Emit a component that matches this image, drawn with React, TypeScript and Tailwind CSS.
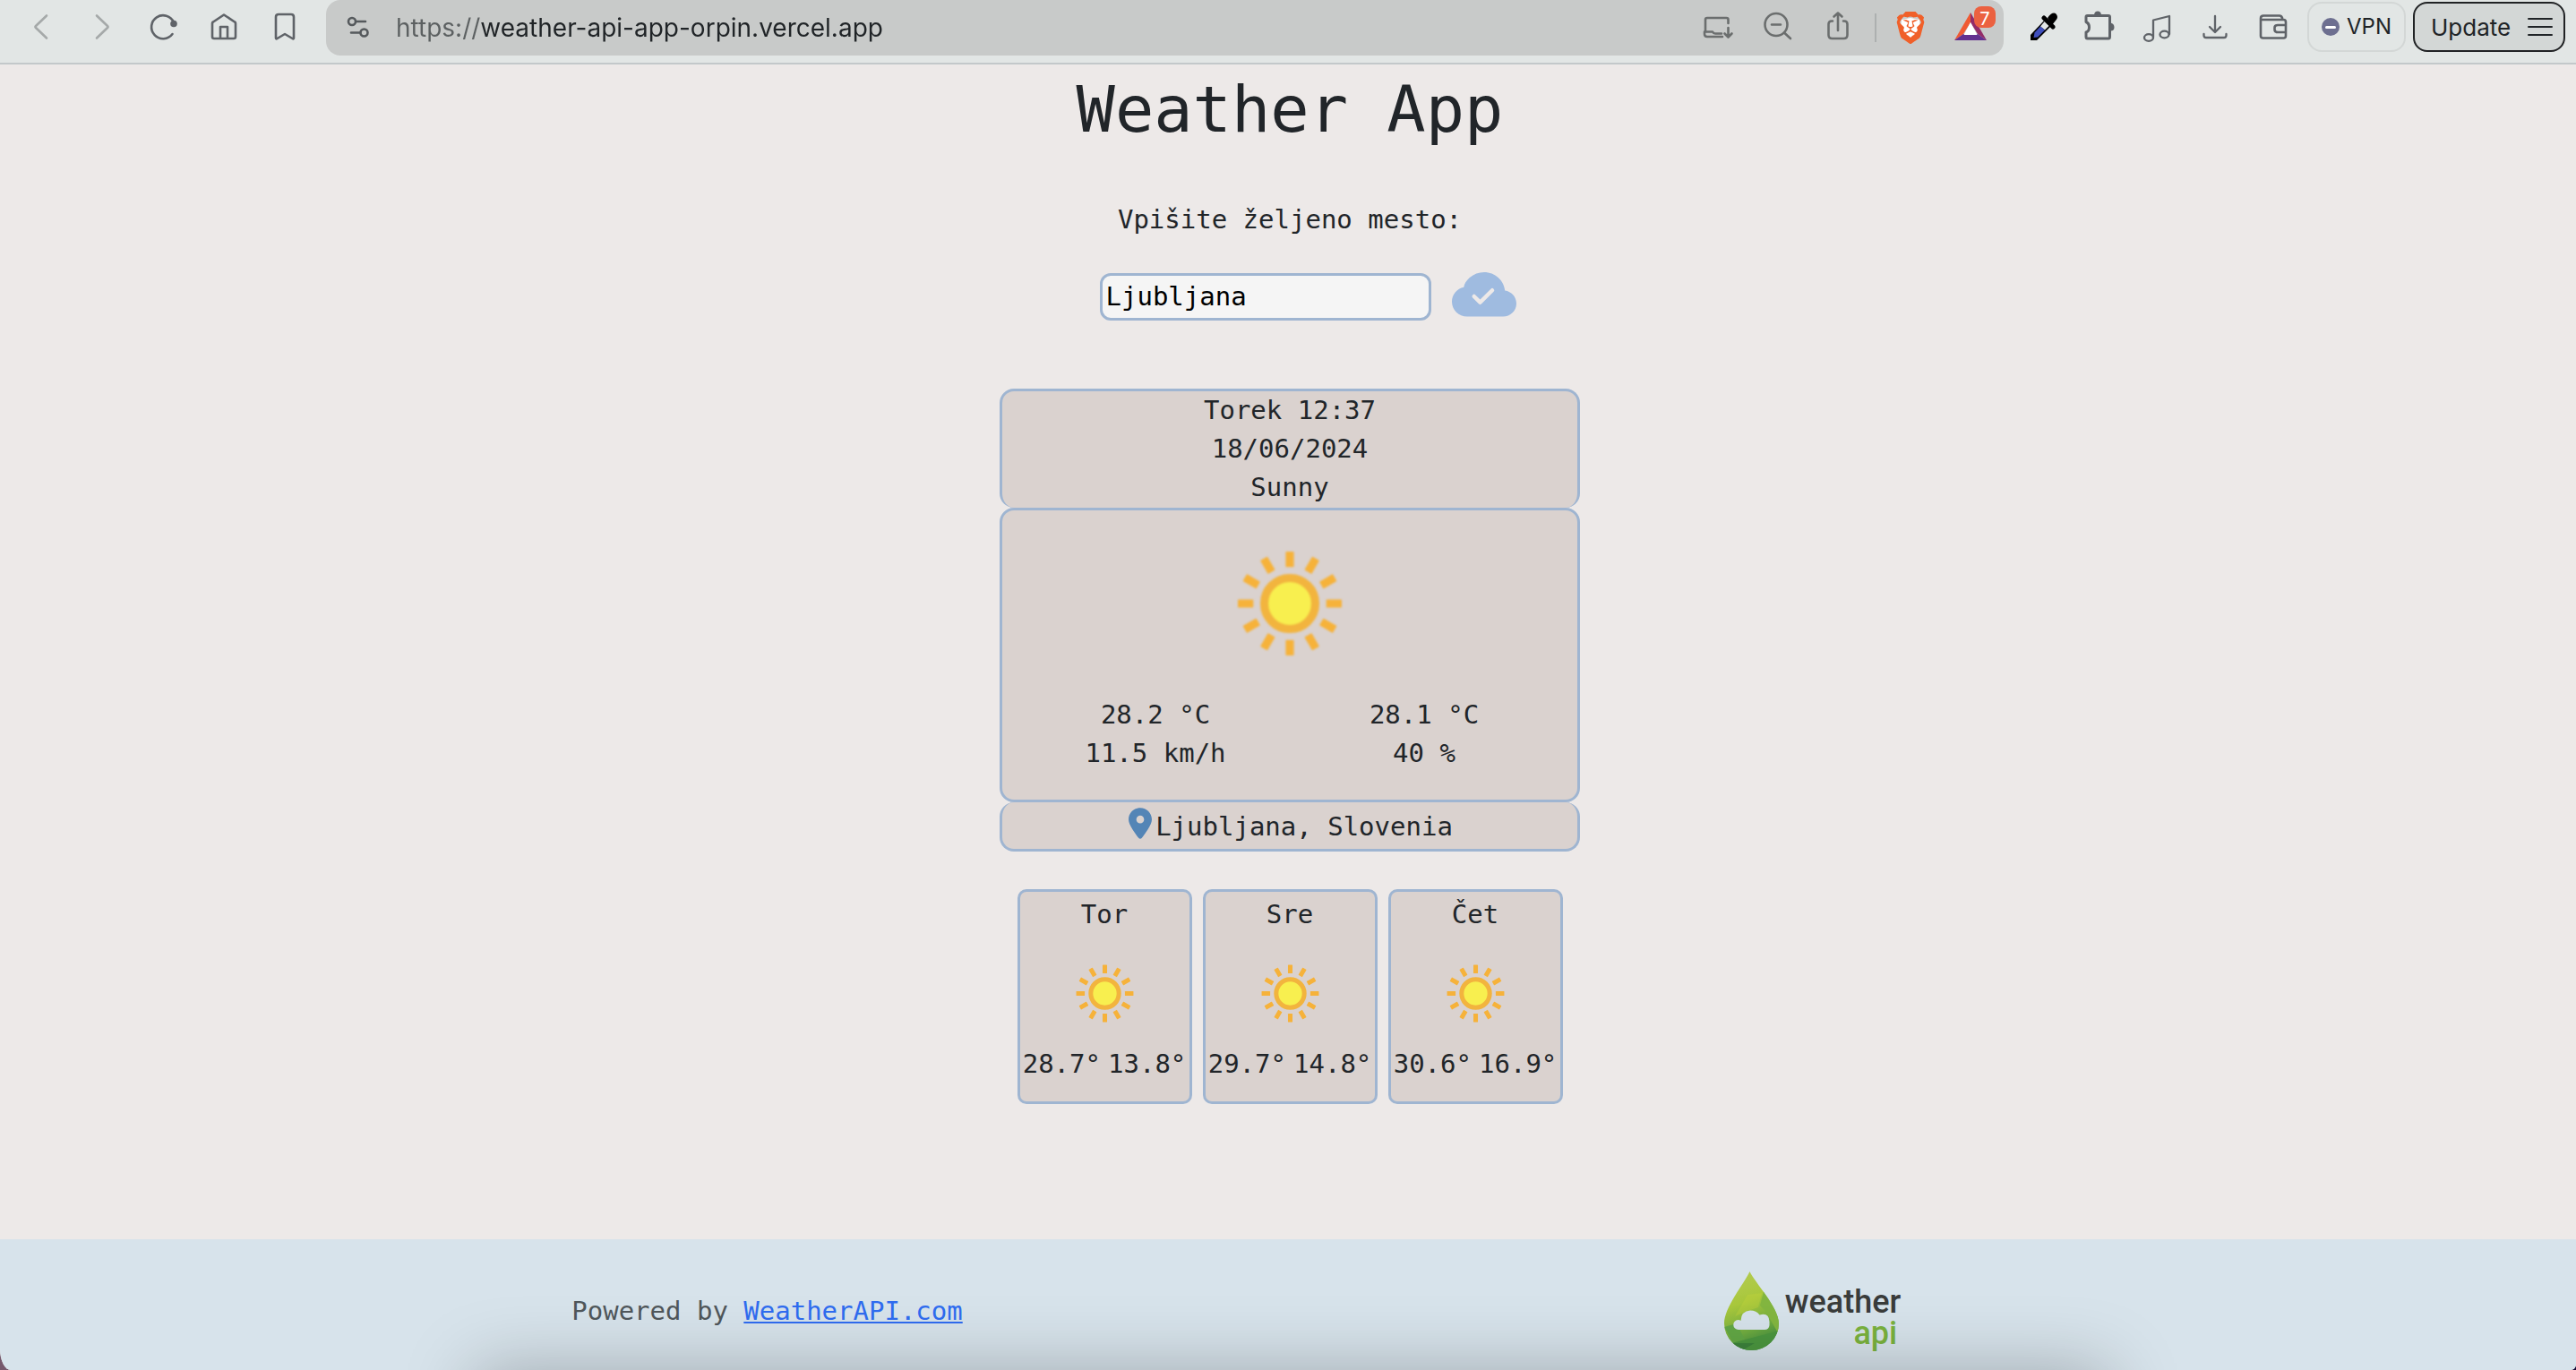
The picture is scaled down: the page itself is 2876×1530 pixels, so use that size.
import type { ReactNode } from "react";
import { FaLocationDot } from "react-icons/fa6";
import { BsCloudCheckFill } from "react-icons/bs";
import { SiBrave } from "react-icons/si";

function ToolButton({ label, muted, children }: { label: string; muted?: boolean; children: ReactNode }) {
  return (
    <button aria-label={label} className={muted ? "size-10 shrink-0 text-[#a5a9a9]" : "size-10 shrink-0"}>
      <svg className="size-10" viewBox="0 0 40 40" fill="none" stroke="currentColor" strokeWidth="2.6" strokeLinecap="round" strokeLinejoin="round">
        {children}
      </svg>
    </button>
  );
}

function Toolbar() {
  return (
    <header className="flex h-[72px] items-start border-b-2 border-[#c3c8ca] bg-[#e2e6e5] pr-3 font-['Inter',sans-serif] text-[28px] text-[#5f6368]">
      <nav aria-label="Navigation" className="flex h-[60px] shrink-0 items-center gap-7 pl-[26px]">
        <ToolButton label="Back" muted><path d="M26 7.500 14 19Q13 20 14 21L26 32.500" /></ToolButton>
        <ToolButton label="Forward" muted><path d="M14 7.500 26 19Q27 20 26 21L14 32.500" /></ToolButton>
        <ToolButton label="Reload">
          <path d="M30.500 28A13 13 0 1 1 32 15" />
          <circle cx="32" cy="16.500" r="3.800" fill="currentColor" stroke="none" />
        </ToolButton>
        <ToolButton label="Home">
          <path d="M7 16Q7 15 8 14.500L20 6.500 32 14.500Q33 15 33 16V31Q33 33 31 33H9Q7 33 7 31ZM16 33V20H24V33" />
        </ToolButton>
        <ToolButton label="Bookmark">
          <path d="M10 32.500V9Q10 6 13 6H27Q30 6 30 9V32.500Q30 34 28.500 33L20 28 11.500 33Q10 34 10 32.500Z" />
        </ToolButton>
      </nav>

      <div className="ml-[26px] flex h-[62px] min-w-0 flex-1 items-center rounded-2xl bg-[#c8cac9] pr-[17px] text-[#6b6e6e]">
        <button aria-label="Site settings" className="ml-5 size-8 shrink-0 text-[#55595c]">
          <svg className="size-8" viewBox="0 0 32 32" fill="none" stroke="currentColor" strokeWidth="2.6" strokeLinecap="round">
            <circle cx="9" cy="9" r="4" /><path d="M14 9H24M8 21.500H18" /><circle cx="22.500" cy="21.500" r="4" />
          </svg>
        </button>
        <input
          aria-label="Address"
          type="url"
          defaultValue="https://weather-api-app-orpin.vercel.app"
          className="ml-[26px] h-12 min-w-0 flex-1 bg-[linear-gradient(to_right,#5c6061_94px,#202427_94px)] bg-clip-text text-transparent outline-none"
        />
        <div className="flex shrink-0 items-center gap-[27px]">
          <ToolButton label="Install app">
            <path d="M31.500 15V11Q31.500 9 29.500 9H8Q6 9 6 11V24M31.500 20V30M27.500 26.500 31.500 30.500 35.500 26.500" />
            <path d="M25 30H8Q5 30 5 27V24.500H14Q15 26.500 17 26.500H24" />
          </ToolButton>
          <ToolButton label="Zoom out">
            <circle cx="18" cy="16.500" r="12.500" /><path d="M13 16.500H23M27 25.500 34 32" />
          </ToolButton>
          <ToolButton label="Share">
            <path d="M14 12.500H13Q9.500 12.500 9.500 16V28Q9.500 32 13.500 32H26.500Q30.500 32 30.500 28V16Q30.500 12.500 27 12.500H26M20 23V4M15.500 7.500 20 3.500 24.500 7.500" />
          </ToolButton>
        </div>
        <div className="ml-[21px] mr-[18px] h-8 w-0.5 bg-[#adb0b0]" />
        <button aria-label="Brave Shields" className="relative mr-[27px] grid size-10 shrink-0 place-items-center">
          <svg className="absolute size-9" viewBox="0 0 36 36" fill="#fff"><path d="M8 9 18 7 28 9 29 18 24 27 18 31 12 27 7 18Z" /></svg>
          <SiBrave className="relative size-9 text-[#f0602a]" />
        </button>
        <button aria-label="Rewards, 7 new" className="relative size-10 shrink-0">
          <svg className="size-10" viewBox="0 0 40 40">
            <path d="M20 3 2 34 12 27 20 14Z" fill="#f05a33" />
            <path d="M20 3 38 34 28 27 20 14Z" fill="#932c68" />
            <path d="M2 34H38L28 27H12Z" fill="#63308f" />
            <path d="M20 14 12.500 28H27.500Z" fill="#fff" />
          </svg>
          <span className="absolute -top-1 left-6 grid size-6 place-items-center rounded-lg bg-[#eb6140] text-xl text-white">7</span>
        </button>
      </div>

      <div className="flex h-[60px] shrink-0 items-center gap-[25px] pl-[25px]">
        <div className="flex items-center gap-[21px]">
          <ToolButton label="Colour picker">
            <path d="M5 35V29L21 12 28 19 12 35Z" fill="#000" stroke="none" />
            <path d="M21.500 13 16 19.500 21 23.500 26.500 18Z" fill="#e2e6e5" stroke="none" />
            <path d="M16 19.500 9.500 26.500 8.500 32 13 31.500 21 23.500Z" fill="#3f4fbd" stroke="none" />
            <path d="M20 10 30 20" stroke="#000" strokeWidth="5" />
            <path d="M24 10Q29 3 33 5 37 9 33 13L29 18Z" fill="#000" stroke="none" />
          </ToolButton>
          <ToolButton label="Extensions">
            <path d="M6 9Q6 7.500 7.500 7.500H31Q32.500 7.500 32.500 9V31Q32.500 33 31 33H7.500Q6 33 6 31V26Q9.500 25 9.500 20.500 9.500 16 6 14.500Z" strokeWidth="3" />
            <path d="M15 6.500Q15.500 2.500 19 2.500T23 6.500ZM33.500 15.500Q37.500 16.500 37.500 20.500T33.500 24.500Z" fill="currentColor" stroke="none" />
          </ToolButton>
        </div>
        <ToolButton label="Playlist">
          <g strokeWidth="2.3"><path d="M16 31.500V12.500L34 8V28" /><ellipse cx="11" cy="32" rx="5" ry="3.800" /><ellipse cx="28.500" cy="28.500" rx="5" ry="3.800" /></g>
        </ToolButton>
        <ToolButton label="Downloads">
          <path d="M20 8V25M14 20 20 26 26 20M7.500 28V29.500Q7.500 32 10 32H30Q32.500 32 32.500 29.500V28" strokeWidth="2.3" />
        </ToolButton>
        <ToolButton label="Wallet">
          <path d="M30 12V10Q29 7.500 27 7.500H9Q6 7.500 6 10.500V30Q6 32.500 8.500 32.500H31.500Q34 32.500 34 30V14.500Q34 12 31.500 12H7M34 18H25Q21.500 18 21.500 21V23Q21.500 26 25 26H34" />
        </ToolButton>
      </div>
      <button className="ml-[18px] mt-0.5 flex h-14 w-[110px] shrink-0 items-center gap-2 rounded-2xl border-2 border-[#d3d7d6] pl-[14px] text-2xl text-[#202427]">
        <span className="grid size-5 place-items-center rounded-full bg-[#6d6f90]"><span className="h-[3px] w-3 rounded-full bg-white" /></span>
        VPN
      </button>
      <button className="ml-2 mt-0.5 flex h-14 w-[170px] shrink-0 items-center justify-between rounded-2xl border-2 border-[#202224] bg-[#d3d7d6] pl-[18px] pr-3 text-[26px] text-[#202427]">
        Update
        <svg className="h-6 w-7" viewBox="0 0 28 24" stroke="currentColor" strokeWidth="2" strokeLinecap="round"><path d="M1 3H27M1 12H27M1 21H27" /></svg>
      </button>
    </header>
  );
}

const rayAngles = [0, 30, 60, 90, 120, 150, 180, 210, 240, 270, 300, 330];

function Sun({ className }: { className: string }) {
  return (
    <svg className={className} viewBox="0 0 116 116" role="img" aria-label="Sunny">
      {rayAngles.map((angle) => (
        <rect key={angle} x="53.500" y="1" width="9" height="17" rx="1" fill="#f6b23a" transform={`rotate(${angle} 58 58)`} />
      ))}
      <circle cx="58" cy="58" r="28" fill="#f8ef4f" stroke="#f2b43e" strokeWidth="9" />
    </svg>
  );
}

const forecast = [
  { day: "Tor", high: "28.7°", low: "13.8°" },
  { day: "Sre", high: "29.7°", low: "14.8°" },
  { day: "Čet", high: "30.6°", low: "16.9°" },
];

function Logo() {
  return (
    <div className="flex items-start gap-1.5">
      <svg className="h-[88px] w-[62px]" viewBox="0 0 62 88" aria-hidden="true">
        <defs>
          <linearGradient id="leaf" x1="0" y1="0" x2="0.3" y2="1">
            <stop offset="0" stopColor="#b5cb55" /><stop offset="0.45" stopColor="#a9c83c" /><stop offset="0.8" stopColor="#72ad40" /><stop offset="1" stopColor="#4b9440" />
          </linearGradient>
          <clipPath id="drop"><path d="M28.500 0C34 12 61 40 61 58A30.500 30 0 0 1 0 58C0 40 22 14 28.500 0Z" /></clipPath>
        </defs>
        <g clipPath="url(#drop)">
          <rect width="62" height="88" fill="url(#leaf)" />
          <path d="M44 22 62 40V72L46 44 40 38Z" fill="#83b640" />
          <path d="M26 26 42 24 38 40 26 44 12 50Z" fill="#c0d23c" opacity=".4" />
          <path d="M0 62 14 58 24 78 12 82Z" fill="#62a745" />
          <path d="M8 80 62 66V88H8Z" fill="#4b963f" />
          <path d="M8 80 34 80 20 88Z" fill="#3c823b" />
        </g>
        <path d="M16 65A5.500 5.500 0 0 1 15.500 54Q17.500 54 18.500 55 19 44 29 43.500 36 43.500 39.500 48.500 50 45.500 50.500 56V60Q50 65 45 65Z" fill="#d7e3eb" />
      </svg>
      <p className="mt-[17px] flex flex-col items-end font-['Roboto',sans-serif] text-4xl leading-[35px] font-medium text-[#3a3c3b]">
        <span>weather</span>
        <span className="pr-1 text-[#7ab23e]">api</span>
      </p>
    </div>
  );
}

export default function App() {
  return (
    <div className="bg-[linear-gradient(to_right,#75586c,#150a35)]">
      <div className="flex min-h-screen flex-col overflow-hidden bg-[#ede9e8] font-['DejaVu_Sans_Mono',monospace] text-[29px] leading-[43px] text-[#212529] [border-bottom-left-radius:12px_24px] [border-bottom-right-radius:6px]">
        <Toolbar />
        <main className="flex flex-1 flex-col items-center pl-1 pb-16">
          <h1 className="mt-[7px] text-[72px] leading-[86px]">Weather App</h1>
          <form className="mt-[59px] flex flex-col items-center" onSubmit={(e) => e.preventDefault()}>
            <label htmlFor="city">Vpišite željeno mesto:</label>
            <div className="mt-7 flex items-center gap-[23px] pl-10">
              <input id="city" defaultValue="Ljubljana" className="h-[53px] w-[370px] rounded-xl border-3 border-[#9fb5d1] bg-[#f5f5f5] px-1 text-black outline-none" />
              <button aria-label="Potrdi"><BsCloudCheckFill className="size-[72px] text-[#9fbbe0]" /></button>
            </div>
          </form>

          <section className="mt-[67px] w-[648px] text-center">
            <div className="rounded-2xl border-x-3 border-t-3 border-[#9fb5d1] bg-[#dad2cf] pb-px">
              <p>Torek 12:37</p>
              <p>18/06/2024</p>
              <p>Sunny</p>
            </div>
            <div className="rounded-2xl border-3 border-[#9fb5d1] bg-[#dad2cf] px-[21px] pb-[30px] pt-[45px]">
              <Sun className="mx-auto size-[118px] blur-[1px]" />
              <div className="mt-11 grid grid-cols-2">
                <p>28.2 °C</p>
                <p>28.1 °C</p>
                <p>11.5 km/h</p>
                <p>40 %</p>
              </div>
            </div>
            <div className="flex items-start justify-center gap-1 rounded-2xl border-x-3 border-b-3 border-[#9fb5d1] bg-[#dad2cf] pb-[3px] pl-0.5 pt-[6px]">
              <FaLocationDot className="h-[35px] w-[26px] text-[#5485b6]" />
              <p>Ljubljana, Slovenia</p>
            </div>
          </section>

          <ul className="mt-[42px] flex gap-3">
            {forecast.map(({ day, high, low }) => (
              <li key={day} className="flex w-[195px] flex-col items-center rounded-[10px] border-3 border-[#9fb5d1] bg-[#dad2cf] pb-5 pt-1">
                <h2>{day}</h2>
                <Sun className="mb-[25px] mt-[34px] size-[65px]" />
                <p className="flex gap-2"><span>{high}</span><span>{low}</span></p>
              </li>
            ))}
          </ul>
        </main>
        <footer className="relative overflow-hidden bg-[#d7e3eb] pl-1">
          <div className="mx-auto grid h-[146px] max-w-[2334px] grid-cols-2 items-center justify-items-center pt-[14px]">
            <p className="text-[#50575b]">
              Powered by <a href="https://www.weatherapi.com/" className="text-[#2f6cf0] underline">WeatherAPI.com</a>
            </p>
            <Logo />
          </div>
          <div className="pointer-events-none absolute left-[530px] right-[521px] top-full h-40 shadow-[0_0_80px_rgba(0,0,0,0.26)]" />
        </footer>
      </div>
    </div>
  );
}
